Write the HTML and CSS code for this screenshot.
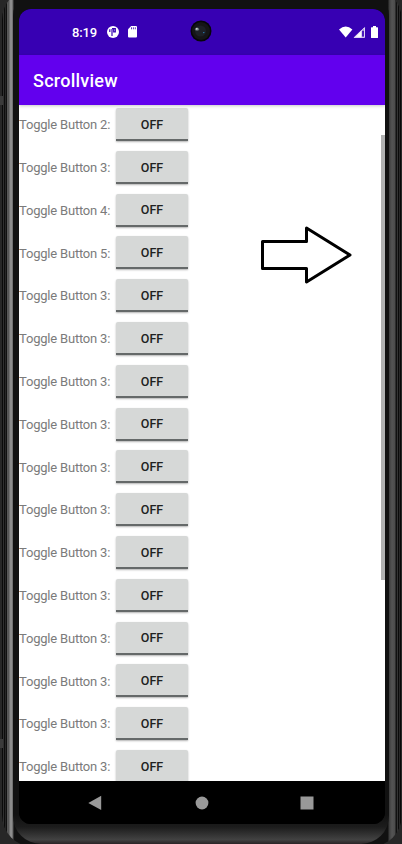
FILE: index.html
```
<!DOCTYPE html>
<html lang="en">
<head>
<meta charset="utf-8">
<title>Scrollview</title>
<link rel="stylesheet" href="styles.css">
</head>
<body>
<div class="device">
<div class="bezel">
<div class="screen">
  <header class="status">
    <span class="clock">8:19</span>
    <svg class="app-icon" width="12" height="12" viewBox="0 0 12 12"><circle cx="6" cy="6" r="6" fill="#fff"/><path d="M5 10V3M2.8 3.2V6M5 2.7h3.3v3.1H6.7V3" fill="none" stroke="#3700b3" stroke-width="1.2"/></svg>
    <svg class="sd-icon" width="9" height="12" viewBox="0 0 9 12"><path d="M3.2 0H8q1 0 1 1v9.5q0 1-1 1H1q-1 0-1-1V3.2z" fill="#fff"/><path d="M3.5 1.3v2M5.4 1.3v2M7.3 1.3v2" stroke="#3700b3" stroke-width=".8"/></svg>
    <svg class="camera" width="22" height="22" viewBox="0 0 22 22"><circle cx="11" cy="11" r="10.5" fill="#060609"/><circle cx="11" cy="11" r="9" fill="#151517"/><circle cx="10.5" cy="11" r="5.5" fill="#1d2026"/><ellipse cx="7" cy="9.2" rx="2" ry="1.6" fill="#66717a"/><circle cx="6.8" cy="8.8" r=".9" fill="#d6ded8"/><circle cx="13.8" cy="12.6" r=".7" fill="#2c8fd0"/></svg>
    <svg class="system" width="40" height="13" viewBox="0 0 40 13"><path d="M0 3.4Q6.7-2.2 13.4 3.4L6.7 11.4z" fill="#fff"/><path d="M26 .8v11H14.6z" fill="#9b80d9"/><path d="M22.6 4v7.8h-8z" fill="#fff"/><path d="M25.5 1.8v9.5H16L25.5 1.8" fill="none" stroke="#ddd3f3"/><path d="M23.2 5h1.6v5.5h-1.6z" fill="#3700b3"/><path d="M34 0h3v1.2h1.4q.6 0 .6.6v9.6q0 .6-.6.6h-5.8q-.6 0-.6-.6V1.8q0-.6.6-.6H34z" fill="#fff"/></svg>
  </header>
  <div class="appbar"><h1>Scrollview</h1></div>
  <main class="scroll">
    <div class="row"><span class="label">Toggle Button 2:</span><button class="toggle">OFF</button></div>
    <div class="row"><span class="label">Toggle Button 3:</span><button class="toggle">OFF</button></div>
    <div class="row"><span class="label">Toggle Button 4:</span><button class="toggle">OFF</button></div>
    <div class="row"><span class="label">Toggle Button 5:</span><button class="toggle">OFF</button></div>
    <div class="row"><span class="label">Toggle Button 3:</span><button class="toggle">OFF</button></div>
    <div class="row"><span class="label">Toggle Button 3:</span><button class="toggle">OFF</button></div>
    <div class="row"><span class="label">Toggle Button 3:</span><button class="toggle">OFF</button></div>
    <div class="row"><span class="label">Toggle Button 3:</span><button class="toggle">OFF</button></div>
    <div class="row"><span class="label">Toggle Button 3:</span><button class="toggle">OFF</button></div>
    <div class="row"><span class="label">Toggle Button 3:</span><button class="toggle">OFF</button></div>
    <div class="row"><span class="label">Toggle Button 3:</span><button class="toggle">OFF</button></div>
    <div class="row"><span class="label">Toggle Button 3:</span><button class="toggle">OFF</button></div>
    <div class="row"><span class="label">Toggle Button 3:</span><button class="toggle">OFF</button></div>
    <div class="row"><span class="label">Toggle Button 3:</span><button class="toggle">OFF</button></div>
    <div class="row"><span class="label">Toggle Button 3:</span><button class="toggle">OFF</button></div>
    <div class="row"><span class="label">Toggle Button 3:</span><button class="toggle">OFF</button></div>
    <div class="scrollbar"></div>
    <svg class="arrow" width="94" height="62" viewBox="0 0 94 62"><path d="M3.5 17.5H47.5V4L91 31 47.5 58V44.5H3.5z" fill="#fff" stroke="#000" stroke-width="3" stroke-linejoin="round"/></svg>
  </main>
  <nav class="navbar">
    <svg width="14" height="16" viewBox="0 0 14 16"><path d="M13.2.7v14.4L.3 7.9z" fill="#999"/></svg>
    <svg width="14" height="14" viewBox="0 0 14 14"><circle cx="7" cy="7" r="6.4" fill="#999"/></svg>
    <svg class="recents" width="14" height="14" viewBox="0 0 14 14"><path d="M.5.5h13v13H.5z" fill="#999"/></svg>
  </nav>
</div>
</div>
<i class="side-key upper"></i><i class="side-key lower"></i>
</div>
</body>
</html>
```
FILE: styles.css
```
* { box-sizing: border-box; }
html, body { margin: 0; height: 844px; overflow: hidden; background: #272727; }
body { font-family: Roboto, sans-serif; }
svg { display: block; flex: none; }

.device {
  position: relative;
  width: 400px;
  height: 859px;
  margin: -12px 0 0 2px;
  padding: 0 11px;
  border-radius: 32px;
  background: linear-gradient(to right,
    #0a0a0a 0 1px, #303030 1px 2px, #0c0c0c 2px 3px, #272727 3px 4px, #101010 4px 5px,
    #585858 5px 6px, #555 6px 7px, #8c8c8c 8px, #8d8d8d 10px, #555 11px, #111 12px,
    #111 386px, #3c3c3c 387px, #545454 390px, #4b4b4b 393px, #111 394px 395px,
    #343434 395px 396px, #0b0b0b 396px 397px, #2a2a2a 397px 398px, #090909 398px 399px, #292929 399px);
}
.bezel {
  width: 376px;
  height: 856px;
  padding: 21px 4px 0 6px;
  border-radius: 28px;
  background: linear-gradient(to bottom, #111 0, #111 96.5%, #1c1c1c 98%, #424242 99.5%, #2a2426 100%);
}
.screen {
  display: flex;
  flex-direction: column;
  width: 366px;
  height: 815px;
  overflow: hidden;
  border-radius: 12px;
  background: #000;
}
.status {
  display: flex;
  align-items: flex-start;
  flex: none;
  height: 46px;
  padding-left: 53px;
  background: #3700b3;
  color: #fff;
}
.clock { width: 35px; margin-top: 16px; font-size: 13px; line-height: 15px; font-weight: 500; letter-spacing: -.15px; }
.app-icon { margin-top: 17px; }
.sd-icon { margin: 17px 0 0 9px; }
.camera { margin: 11px 0 0 53px; }
.system { margin: 17px 0 0 127px; }

.appbar {
  position: relative;
  z-index: 1;
  display: flex;
  align-items: center;
  flex: none;
  height: 50px;
  padding: 1px 0 0 14px;
  background: #6200ee;
  box-shadow: 0 1px 3px rgba(0, 0, 0, .22);
}
h1 { margin: 0; color: #fff; font-size: 18px; line-height: 24px; font-weight: 500; letter-spacing: .25px; }

.scroll {
  position: relative;
  flex: none;
  height: 676px;
  padding-top: 3px;
  overflow: hidden;
  background: #fff;
}
.row { display: flex; height: 42.8px; }
.label { width: 97px; padding-top: 9.3px; color: #7b7b7b; font-size: 13px; line-height: 16px; letter-spacing: -.2px; white-space: nowrap; }
.toggle {
  width: 72px;
  height: 33px;
  padding: 2.6px 0 0;
  border: 0;
  border-bottom: 2px solid #656969;
  border-radius: 2px 2px 0 0;
  background: #d6d8d7;
  box-shadow: 0 1px 2px rgba(0, 0, 0, .3);
  color: #202121;
  font: 500 12.5px/16px Roboto, sans-serif;
}
.scrollbar { position: absolute; top: 30px; right: 0; width: 4px; height: 445px; background: #b1b2b2; }
.arrow { position: absolute; left: 240px; top: 119px; }

.navbar {
  display: flex;
  align-items: center;
  flex: none;
  gap: 93px;
  height: 43px;
  padding-left: 69px;
  background: #000;
}
.recents { margin-left: -2px; }
.side-key { position: absolute; left: -2px; width: 3px; height: 9px; background: #3b3b3b; }
.upper { top: 108px; }
.lower { top: 751px; }
```
